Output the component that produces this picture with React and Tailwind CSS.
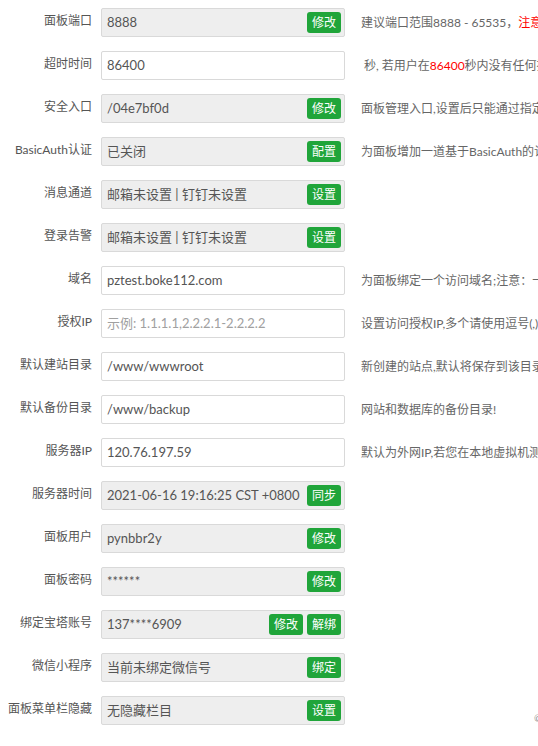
import React from "react";

const rows = [
  { label: "面板端口", value: "8888", disabled: true, buttons: ["修改"], desc: <>建议端口范围8888 - 65535，<span className="text-[#ff0000]">注意：有安全组的服务器请提前在安全组放行新端口</span></> },
  { label: "超时时间", value: "86400", desc: <span className="pl-[3px]">秒, 若用户在<span className="text-[#ff0000]">86400</span>秒内没有任何操作，将自动退出面板</span> },
  { label: "安全入口", value: "/04e7bf0d", disabled: true, buttons: ["修改"], desc: "面板管理入口,设置后只能通过指定安全入口登录面板,如: /xxxxxx" },
  { label: "BasicAuth认证", value: "已关闭", disabled: true, buttons: ["配置"], desc: "为面板增加一道基于BasicAuth的认证服务，有效防止面板被扫描" },
  { label: "消息通道", value: "邮箱未设置 | 钉钉未设置", disabled: true, buttons: ["设置"] },
  { label: "登录告警", value: "邮箱未设置 | 钉钉未设置", disabled: true, buttons: ["设置"] },
  { label: "域名", value: "pztest.boke112.com", desc: "为面板绑定一个访问域名;注意：一旦绑定域名,只能通过域名访问面板!" },
  { label: "授权IP", placeholder: "示例: 1.1.1.1,2.2.2.1-2.2.2.2", desc: "设置访问授权IP,多个请使用逗号(,)隔开,注意：一旦设置授权IP,只有指定IP的电脑能访问面板!" },
  { label: "默认建站目录", value: "/www/wwwroot", desc: "新创建的站点,默认将保存到该目录的下级目录!" },
  { label: "默认备份目录", value: "/www/backup", desc: "网站和数据库的备份目录!" },
  { label: "服务器IP", value: "120.76.197.59", desc: "默认为外网IP,若您在本地虚拟机测试,请填写虚拟机内网IP!" },
  { label: "服务器时间", value: "2021-06-16 19:16:25 CST +0800", disabled: true, buttons: ["同步"] },
  { label: "面板用户", value: "pynbbr2y", disabled: true, buttons: ["修改"] },
  { label: "面板密码", value: "******", disabled: true, buttons: ["修改"] },
  { label: "绑定宝塔账号", value: "137****6909", disabled: true, buttons: ["修改", "解绑"] },
  { label: "微信小程序", value: "当前未绑定微信号", disabled: true, buttons: ["绑定"] },
  { label: "面板菜单栏隐藏", value: "无隐藏栏目", disabled: true, buttons: ["设置"] },
];

function Row({ row }) {
  return (
    <div className="flex h-[29px] items-center">
      <div className="w-[92px] shrink-0 pb-[4px] text-right text-[12px] text-[#555]">{row.label}</div>
      <div
        className={`relative ml-[9px] flex h-[29px] w-[244px] shrink-0 items-center rounded-[2px] border border-[#d9d9d9] pl-[5px] text-[13px] ${
          row.disabled ? "bg-[#eeeeee] text-[#555]" : "bg-white text-[#555]"
        }`}
      >
        {row.value ? <span className="whitespace-nowrap">{row.value}</span> : <span className="whitespace-nowrap text-[#a0a0a0]">{row.placeholder}</span>}
        {row.buttons && (
          <div className="absolute right-[3px] top-[3px] flex gap-[4px]">
            {row.buttons.map((b) => (
              <span key={b} className="flex h-[21px] w-[34px] items-center justify-center rounded-[3px] bg-[#20a53a] text-[12px] text-white">
                {b}
              </span>
            ))}
          </div>
        )}
      </div>
      {row.desc && <div className="ml-[16px] whitespace-nowrap text-[12px] text-[#666]">{row.desc}</div>}
    </div>
  );
}

export default function App() {
  return (
    <div className="relative h-[746px] w-[538px] overflow-hidden bg-white" style={{ fontFamily: 'Lato, "Noto Sans CJK SC", sans-serif' }}>
      <div className="flex flex-col gap-[14px] pt-[8px]">
        {rows.map((r) => (
          <Row key={r.label} row={r} />
        ))}
      </div>
      <span className="absolute left-[534px] top-[711px] text-[10px] text-[#999]">©</span>
    </div>
  );
}
